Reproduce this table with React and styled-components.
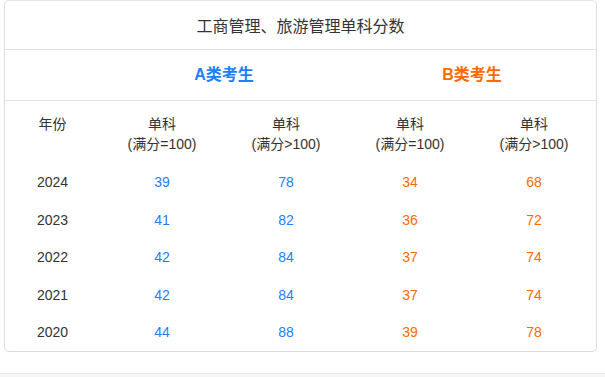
import React from 'react';
import styled, { createGlobalStyle } from 'styled-components';

const GlobalStyle = createGlobalStyle`
  body {
    margin: 0;
    background: #fff;
    font-family: "Liberation Sans", Arial, "Noto Sans CJK SC", sans-serif;
    color: #333;
  }
`;

const Page = styled.div`
  width: 605px;
  height: 377px;
  overflow: hidden;
`;

const Card = styled.div`
  width: 593px;
  margin-left: 4px;
  box-sizing: border-box;
  border: 1px solid #dcdcdc;
  border-top-color: #e6e6e6;
  border-radius: 5px;
  background: #fff;
`;

const Title = styled.div`
  height: 48px;
  display: flex;
  align-items: center;
  justify-content: center;
  font-size: 16px;
  color: #333;
  border-bottom: 1px solid #e3e3e3;
`;

const Table = styled.table`
  width: 100%;
  border-collapse: collapse;
  table-layout: fixed;
`;

const GroupRow = styled.tr`
  height: 50px;
  border-bottom: 1px solid #e3e3e3;
`;

const GroupCell = styled.th`
  font-size: 16px;
  font-weight: bold;
  color: ${p => p.$color};
  padding: 0 0 4px;
`;

const HeadCell = styled.th`
  font-size: 14px;
  font-weight: normal;
  color: #333;
  line-height: 20px;
  padding: 13px 0 10px;
  vertical-align: top;
`;

const Cell = styled.td`
  font-size: 14px;
  line-height: 20px;
  height: 37.5px;
  padding: 0;
  text-align: center;
  color: ${p => p.$color || '#333'};
`;

const Footer = styled.div`
  margin-top: 21px;
  height: 10px;
  border-top: 1px solid #e6e6e6;
  background: #f5f5f5;
`;

const BLUE = '#1e80ff';
const ORANGE = '#ff6a00';

const rows = [
  [2024, 39, 78, 34, 68],
  [2023, 41, 82, 36, 72],
  [2022, 42, 84, 37, 74],
  [2021, 42, 84, 37, 74],
  [2020, 44, 88, 39, 78],
];

export default function App() {
  return (
    <Page>
      <GlobalStyle />
      <Card>
        <Title>工商管理、旅游管理单科分数</Title>
        <Table>
          <colgroup>
            <col style={{ width: '95px' }} />
            <col />
            <col />
            <col />
            <col />
          </colgroup>
          <thead>
            <GroupRow>
              <GroupCell />
              <GroupCell colSpan={2} $color={BLUE}>A类考生</GroupCell>
              <GroupCell colSpan={2} $color={ORANGE}>B类考生</GroupCell>
            </GroupRow>
            <tr>
              <HeadCell>年份</HeadCell>
              <HeadCell>单科<br />(满分=100)</HeadCell>
              <HeadCell>单科<br />(满分&gt;100)</HeadCell>
              <HeadCell>单科<br />(满分=100)</HeadCell>
              <HeadCell>单科<br />(满分&gt;100)</HeadCell>
            </tr>
          </thead>
          <tbody>
            {rows.map(([year, a1, a2, b1, b2]) => (
              <tr key={year}>
                <Cell>{year}</Cell>
                <Cell $color={BLUE}>{a1}</Cell>
                <Cell $color={BLUE}>{a2}</Cell>
                <Cell $color={ORANGE}>{b1}</Cell>
                <Cell $color={ORANGE}>{b2}</Cell>
              </tr>
            ))}
          </tbody>
        </Table>
      </Card>
      <Footer />
    </Page>
  );
}
